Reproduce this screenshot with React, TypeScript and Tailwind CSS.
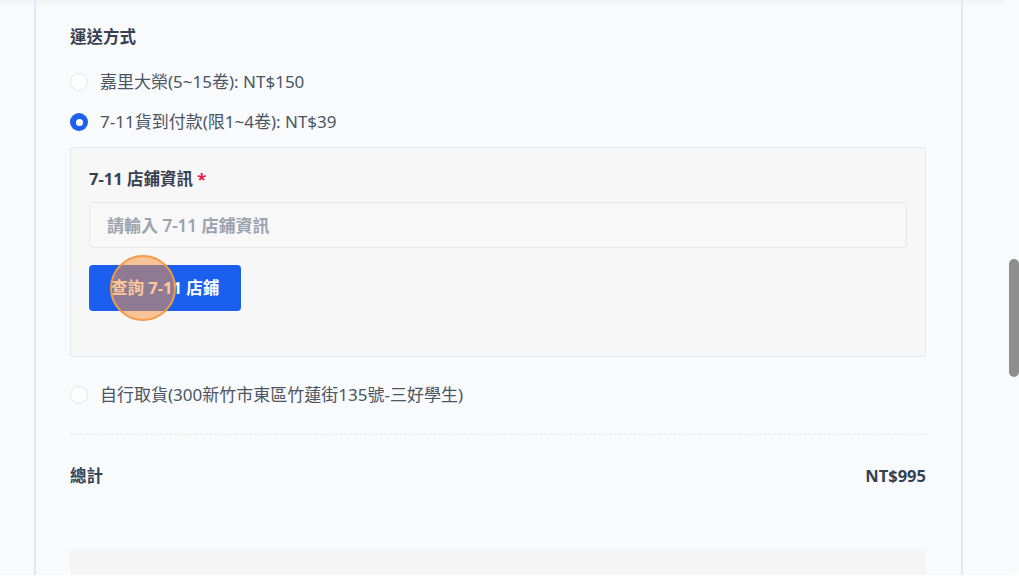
import React from 'react';

const font = { fontFamily: '"Noto Sans", "Noto Sans CJK TC", sans-serif' };

type Option = { id: string; label: string };

const OPTIONS: Option[] = [
  { id: 'kerry', label: '嘉里大榮(5~15卷): NT$150' },
  { id: 'seven', label: '7-11貨到付款(限1~4卷): NT$39' },
];

const Radio: React.FC<{ checked?: boolean; label: string }> = ({ checked, label }) => (
  <label className="flex h-[40px] items-center gap-[12px]">
    {checked ? (
      <span className="flex h-[18px] w-[18px] items-center justify-center rounded-full bg-[#1c60ee]">
        <span className="h-[7px] w-[7px] rounded-full bg-white" />
      </span>
    ) : (
      <span className="h-[18px] w-[18px] rounded-full border border-[#e5e7eb] bg-white" />
    )}
    <span className="text-[17px] text-[#4b5563]">{label}</span>
  </label>
);

export default function App() {
  return (
    <div className="h-[581px] w-full overflow-hidden bg-white" style={font}>
      <div className="flex h-[575px] overflow-hidden rounded-br-[8px] bg-[#f8fafc] shadow-[inset_0_6px_6px_-4px_rgba(0,0,0,0.05)]">
        {/* left gutter */}
        <div className="w-[36px] shrink-0 border-r-2 border-[#e2e8f0]" />

        {/* main column */}
        <div className="flex-1 border-r-2 border-[#e2e8f0] pl-[34px] pr-[35px] pt-[26px]">
          <h3 className="h-[22px] text-[16.5px] font-bold leading-[22px] text-[#374151]">運送方式</h3>

          <div className="mt-[14px]">
            {OPTIONS.map((o, i) => (
              <Radio key={o.id} label={o.label} checked={i === 1} />
            ))}
          </div>

          <div className="mt-[5px] h-[210px] rounded-[4px] border border-[#e5e7eb] bg-[#f7f7f7] px-[18px] pt-[20px]">
            <div className="h-[22px] text-[16.5px] font-bold leading-[22px] text-[#374151]">
              7-11 店鋪資訊 <span className="text-[#e11d48]">*</span>
            </div>
            <input
              type="text"
              placeholder="請輸入 7-11 店鋪資訊"
              className="mt-[12px] h-[46px] w-full rounded-[4px] border border-[#e5e7eb] bg-[#f8f8f8] px-[17px] text-[17px] font-semibold outline-none placeholder:text-[#9ca3af]"
            />
            <div className="relative mt-[17px] w-fit">
              <button className="h-[46px] rounded-[4px] bg-[#1b5fee] px-[22px] text-[16.5px] font-bold text-white">
                查詢 7-11 店鋪
              </button>
              <span className="pointer-events-none absolute left-[21px] top-[-10px] h-[66px] w-[66px] rounded-full border-2 border-[#f59a45] bg-[rgba(249,148,62,0.52)]" />
            </div>
          </div>

          <div className="mt-[18px]">
            <Radio label="自行取貨(300新竹市東區竹蓮街135號-三好學生)" />
          </div>

          <div className="mt-[19px] border-t border-dashed border-[#e5e7eb]" />

          <div className="mt-[30px] flex h-[22px] items-center justify-between text-[16.5px] font-bold leading-[22px] text-[#334155]">
            <span>總計</span>
            <span>NT$995</span>
          </div>

          <div className="mt-[62px] h-[40px] rounded-t-[4px] bg-[#f5f5f5]" />
        </div>

        {/* right side with scrollbar */}
        <div className="flex w-[56px] shrink-0 justify-end">
          <div className="w-[14px] bg-[#f9fafb] pl-[4px]">
            <div className="mt-[259px] h-[118px] w-[10px] rounded-full bg-[#8e8e8e]" />
          </div>
        </div>
      </div>
    </div>
  );
}
